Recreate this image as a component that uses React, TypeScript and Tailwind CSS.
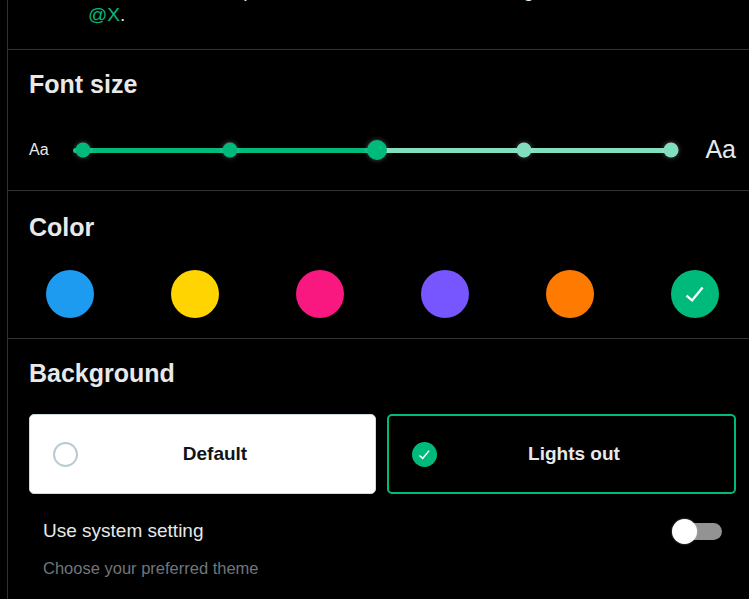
import React from "react";

const Check = ({ size }: { size: number }) => (
  <svg width={size} height={size} viewBox="0 0 24 24" fill="#ffffff" aria-hidden="true">
    <path d="M9.64 18.952l-5.55-4.861 1.317-1.504 3.951 3.459 8.379-10.203 1.546 1.27-9.643 11.839z" />
  </svg>
);

export default function App() {
  return (
    <div className="w-[749px] h-[599px] overflow-hidden bg-black font-['Liberation_Sans',Arial,sans-serif] text-[#e7e9ea]">
      <div className="ml-[7px] w-[750px] h-full border-l border-[#2f3336]">
        {/* Preview (clipped) */}
        <div className="h-[50px] overflow-hidden border-b border-[#2f3336] px-[21px]">
          <div className="pl-[59px] mt-[-21px] text-[19px] whitespace-nowrap">
            <div className="leading-[23px]">which can include photos, videos, links, text, hashtags, and mentions like</div>
            <div className="leading-[25px]">
              <span className="text-[#00ba7c]">@X</span>.
            </div>
          </div>
        </div>

        {/* Font size */}
        <div className="border-b border-[#2f3336] px-[21px] pt-[19px] pb-[20px]">
          <h2 className="text-[25px] leading-[30px] font-bold">Font size</h2>
          <div className="mt-[31px] h-[40px] flex items-center">
            <div className="w-[44px] text-[16px]">Aa</div>
            <div className="relative w-[607px] h-[5px]">
              <div className="absolute inset-0 flex rounded-full overflow-hidden">
                <div className="w-[304px] bg-[#00ba7c]" />
                <div className="flex-1 bg-[#81debe]" />
              </div>
              <div className="absolute left-[10px] top-1/2 -translate-x-1/2 -translate-y-1/2 w-[15px] h-[15px] rounded-full bg-[#00ba7c] shadow-[0_0_5px_rgba(255,255,255,0.35)]" />
              <div className="absolute left-[157px] top-1/2 -translate-x-1/2 -translate-y-1/2 w-[15px] h-[15px] rounded-full bg-[#00ba7c] shadow-[0_0_5px_rgba(255,255,255,0.35)]" />
              <div className="absolute left-[304px] top-1/2 -translate-x-1/2 -translate-y-1/2 w-[20px] h-[20px] rounded-full bg-[#00ba7c] shadow-[0_0_5px_rgba(255,255,255,0.35)]" />
              <div className="absolute left-[451px] top-1/2 -translate-x-1/2 -translate-y-1/2 w-[15px] h-[15px] rounded-full bg-[#81debe] shadow-[0_0_5px_rgba(255,255,255,0.35)]" />
              <div className="absolute left-[598px] top-1/2 -translate-x-1/2 -translate-y-1/2 w-[15px] h-[15px] rounded-full bg-[#81debe] shadow-[0_0_5px_rgba(255,255,255,0.35)]" />
            </div>
            <div className="ml-[27px] text-[25px]">Aa</div>
          </div>
        </div>

        {/* Color */}
        <div className="border-b border-[#2f3336] px-[21px] pt-[21px] pb-[20px]">
          <h2 className="text-[25px] leading-[30px] font-bold">Color</h2>
          <div className="mt-[28px] w-[707px] px-[17px] flex justify-between">
            <div className="w-[48px] h-[48px] rounded-full bg-[#1d9bf0]" />
            <div className="w-[48px] h-[48px] rounded-full bg-[#ffd400]" />
            <div className="w-[48px] h-[48px] rounded-full bg-[#f91880]" />
            <div className="w-[48px] h-[48px] rounded-full bg-[#7856ff]" />
            <div className="w-[48px] h-[48px] rounded-full bg-[#ff7a00]" />
            <div className="w-[48px] h-[48px] rounded-full bg-[#00ba7c] flex items-center justify-center">
              <Check size={28} />
            </div>
          </div>
        </div>

        {/* Background */}
        <div className="px-[21px] pt-[19px]">
          <h2 className="text-[25px] leading-[30px] font-bold">Background</h2>
          <div className="mt-[26px] flex gap-[11px]">
            <div className="w-[347px] h-[80px] bg-white rounded-[5px] border border-[#cfd9de] flex items-center px-[23px]">
              <div className="w-[25px] h-[25px] rounded-full border-2 border-[#b9cad3]" />
              <div className="flex-1 text-center text-[19px] font-bold text-[#0f1419]">Default</div>
            </div>
            <div className="w-[349px] h-[80px] rounded-[5px] border-2 border-[#00ba7c] flex items-center px-[23px]">
              <div className="w-[25px] h-[25px] rounded-full bg-[#00ba7c] flex items-center justify-center">
                <Check size={17} />
              </div>
              <div className="flex-1 text-center text-[19px] font-bold text-[#e7e9ea]">Lights out</div>
            </div>
          </div>
          <div className="w-[707px] px-[14px]">
            <div className="mt-[17px] h-[40px] flex items-center justify-between">
              <div className="text-[19px]">Use system setting</div>
              <div className="relative w-[50px] h-[25px]">
                <div className="absolute left-[1px] right-0 top-[4px] h-[17px] rounded-full bg-[#939393]" />
                <div className="absolute left-0 top-0 w-[25px] h-[25px] rounded-full bg-white shadow-[0_0_2px_rgba(255,255,255,0.5)]" />
              </div>
            </div>
            <div className="mt-[7px] text-[16.5px] leading-[20px] text-[#71767b]">Choose your preferred theme</div>
          </div>
        </div>
      </div>
    </div>
  );
}
